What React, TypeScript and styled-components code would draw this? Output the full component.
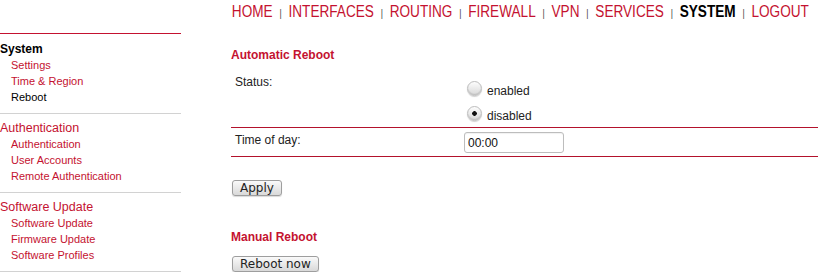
import * as React from "react"
import styled, { createGlobalStyle } from "styled-components"

const RED = "#c41230"

const GlobalStyle = createGlobalStyle`
  body {
    margin: 0;
    background: #fff;
    font-family: "Liberation Sans", Arial, sans-serif;
    color: #222;
  }
`

const Page = styled.div`
  display: grid;
  grid-template-columns: 181px 1fr;
  grid-template-rows: 33px auto;
  column-gap: 50px;
  width: 818px;
  overflow: hidden;
`

// the menu font is a narrow grotesque; no narrow face is installed, so squeeze the row
const Nav = styled.nav`
  grid-column: 2;
  display: flex;
  align-items: baseline;
  padding-top: 2px;
  padding-left: 1px;
  font-size: 16px;
  line-height: 20px;
  transform: scaleX(0.85);
  transform-origin: left top;
`

const NavLink = styled.a<{ $active?: boolean }>`
  color: ${(p) => (p.$active ? "#000" : RED)};
  font-weight: ${(p) => (p.$active ? "bold" : "normal")};
  text-decoration: none;
  white-space: nowrap;
`

const NavSep = styled.span`
  font-size: 10px;
  color: #444;
  padding: 0 8px;
`

const Sidebar = styled.aside`
  grid-column: 1;
  border-top: 1px solid ${RED};
`

const Section = styled.div`
  padding: 6px 0 8px;
  border-bottom: 1px solid #d2d2d2;
  &:first-child {
    padding-top: 7px;
  }
`

const SectionTitle = styled.a<{ $active?: boolean }>`
  display: block;
  font-size: ${(p) => (p.$active ? "12px" : "12.5px")};
  font-weight: ${(p) => (p.$active ? "bold" : "normal")};
  line-height: 16px;
  color: ${(p) => (p.$active ? "#000" : RED)};
  text-decoration: none;
`

const SideItem = styled.a<{ $active?: boolean }>`
  display: block;
  padding-left: 11px;
  font-size: 11px;
  line-height: 16px;
  color: ${(p) => (p.$active ? "#000" : RED)};
  text-decoration: none;
`

const Main = styled.main`
  grid-column: 2;
  padding-top: 14px;
`

const Heading = styled.h2<{ $gap?: number }>`
  margin: ${(p) => p.$gap ?? 0}px 0 0;
  font-size: 12px;
  line-height: 16px;
  font-weight: bold;
  color: ${RED};
`

const Form = styled.div`
  margin-top: 7px;
`

const Row = styled.div`
  display: grid;
  grid-template-columns: 233px 1fr;
  padding: 4px 0 3px;
  border-bottom: 1px solid #b3122c;
`

const Label = styled.div`
  padding-left: 4px;
  font-size: 12px;
  line-height: 16px;
  color: #222;
`

const Options = styled.div`
  display: flex;
  flex-direction: column;
`

const Option = styled.label`
  display: flex;
  align-items: flex-end;
  height: 25px;
  font-size: 12px;
  line-height: 16px;
  color: #222;
`

const Radio = styled.input.attrs({ type: "radio" })`
  appearance: none;
  width: 15px;
  height: 15px;
  margin: 0 5px 3px 3px;
  border-radius: 50%;
  border: 1px solid #bdbdbd;
  background: linear-gradient(#fdfdfd, #d8d8d8);
  box-shadow: inset 0 -1px 1px rgba(0, 0, 0, 0.12), 0 1px 1px rgba(0, 0, 0, 0.18);
  &:checked {
    background: radial-gradient(circle, #111 0 2px, transparent 2.6px),
      linear-gradient(#fdfdfd, #d8d8d8);
  }
`

const TextInput = styled.input`
  box-sizing: border-box;
  width: 100px;
  height: 21px;
  margin: 0;
  padding: 0 3px;
  border: 1px solid #bdbdbd;
  border-radius: 3px;
  font-family: "Liberation Sans", Arial, sans-serif;
  font-size: 12px;
  color: #111;
  box-shadow: inset 0 1px 1px rgba(0, 0, 0, 0.06);
`

const Button = styled.button<{ $gap: number }>`
  display: block;
  margin: ${(p) => p.$gap}px 0 0 1px;
  padding: 0 7px;
  height: 16px;
  border: 1px solid #9e9e9e;
  border-radius: 3px;
  background: linear-gradient(#fafafa, #d9d9d9);
  box-shadow: 0 1px 1px rgba(0, 0, 0, 0.15);
  font-family: "DejaVu Sans", Verdana, sans-serif;
  font-size: 12px;
  line-height: 14px;
  color: #222;
`

const sections = [
  { title: "System", active: true, items: ["Settings", "Time & Region", "Reboot"] },
  { title: "Authentication", items: ["Authentication", "User Accounts", "Remote Authentication"] },
  { title: "Software Update", items: ["Software Update", "Firmware Update", "Software Profiles"] },
]

const menu = ["HOME", "INTERFACES", "ROUTING", "FIREWALL", "VPN", "SERVICES", "SYSTEM", "LOGOUT"]

export default function App() {
  return (
    <Page>
      <GlobalStyle />
      <Nav>
        {menu.map((m, i) => (
          <React.Fragment key={m}>
            {i > 0 && <NavSep>|</NavSep>}
            <NavLink href="#" $active={m === "SYSTEM"}>{m}</NavLink>
          </React.Fragment>
        ))}
      </Nav>

      <Sidebar>
        {sections.map((s) => (
          <Section key={s.title}>
            <SectionTitle href="#" $active={s.active}>{s.title}</SectionTitle>
            {s.items.map((it) => (
              <SideItem key={it} href="#" $active={it === "Reboot"}>{it}</SideItem>
            ))}
          </Section>
        ))}
      </Sidebar>

      <Main>
        <Heading>Automatic Reboot</Heading>
        <Form>
          <Row>
            <Label>Status:</Label>
            <Options>
              <Option><Radio name="reboot" />enabled</Option>
              <Option><Radio name="reboot" defaultChecked />disabled</Option>
            </Options>
          </Row>
          <Row>
            <Label>Time of day:</Label>
            <div>
              <TextInput defaultValue="00:00" />
            </div>
          </Row>
        </Form>
        <Button $gap={23}>Apply</Button>
        <Heading $gap={33}>Manual Reboot</Heading>
        <Button $gap={11}>Reboot now</Button>
      </Main>
    </Page>
  )
}
